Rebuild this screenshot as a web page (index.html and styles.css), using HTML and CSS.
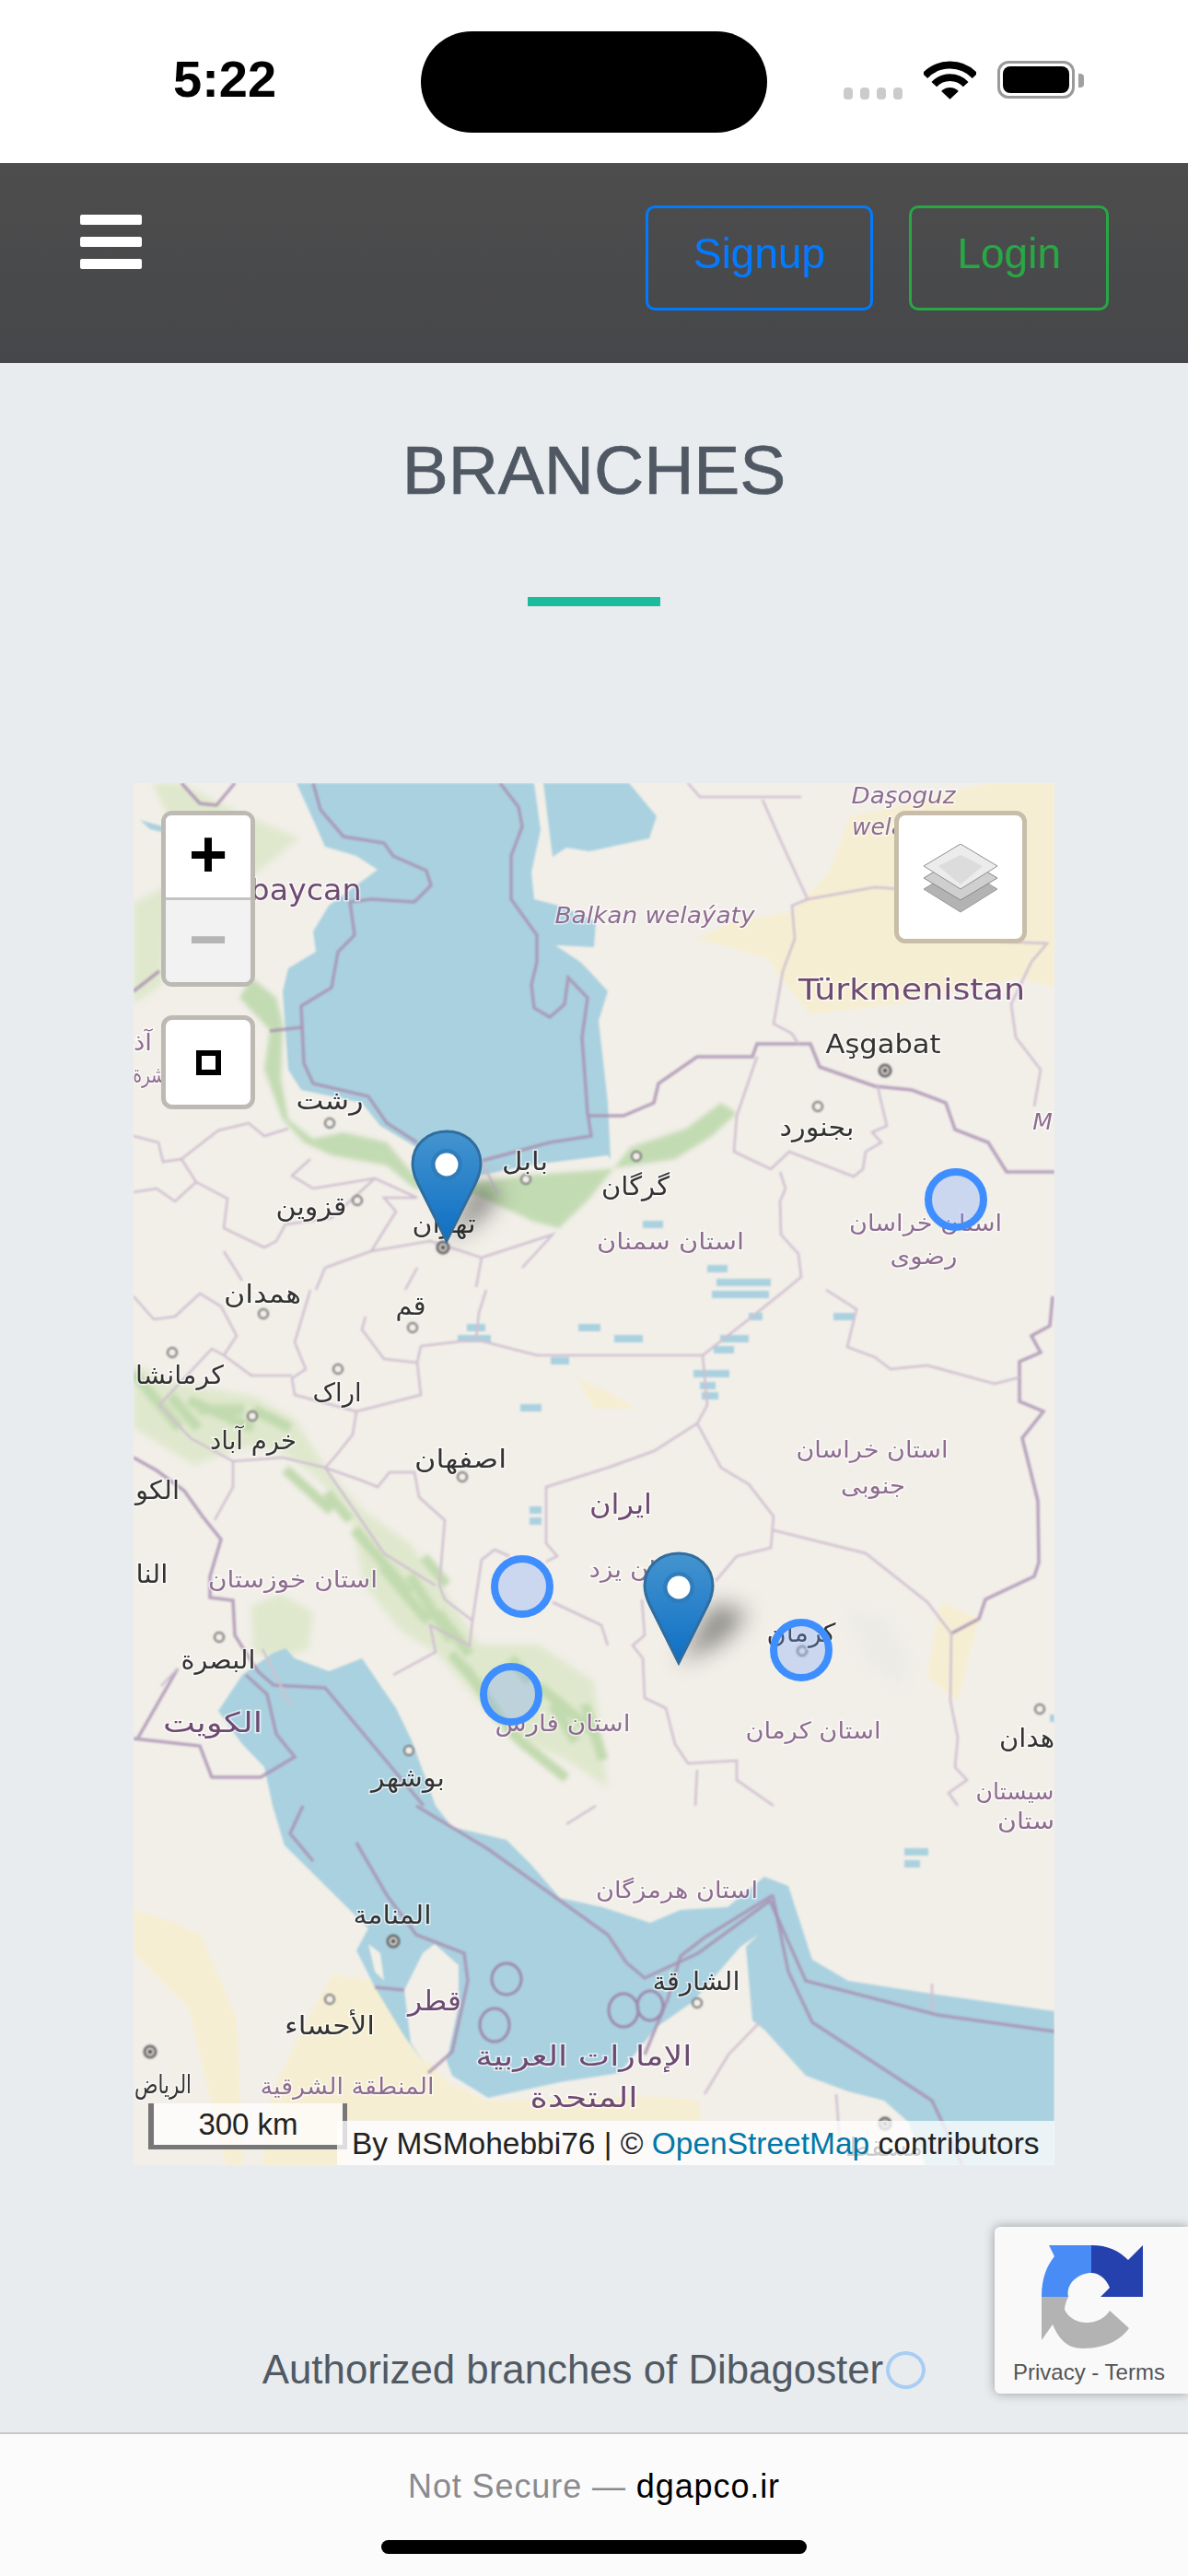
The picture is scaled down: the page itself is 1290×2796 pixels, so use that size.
FILE: index.html
```html
<!DOCTYPE html>
<html lang="en">
<head>
<meta charset="utf-8">
<title>Branches</title>
<link rel="stylesheet" href="styles.css">
</head>
<body>
<div class="page">
  <header class="status">
    <span class="time">5:22</span>
    <span class="island"></span>
    <span class="signal"><i></i><i></i><i></i><i></i></span>
    <svg class="wifi" viewBox="0 0 58 42"><path class="wifi-arc" d="M1.3 16.2A38 38 0 0 1 56.7 16.2"/><path class="wifi-arc" d="M11.5 25.7A24 24 0 0 1 46.5 25.7"/><path d="M29 42L19.5 33.2A13 13 0 0 1 38.5 33.2Z"/></svg>
    <span class="battery"><span class="battery-level"></span></span>
    <span class="battery-nub"></span>
  </header>

  <nav class="nav">
    <div class="burger"><i></i><i></i><i></i></div>
    <div class="nav-actions">
      <a class="btn btn-blue">Signup</a>
      <a class="btn btn-green">Login</a>
    </div>
  </nav>

  <main class="main">
    <h1 class="title">BRANCHES</h1>
    <div class="rule"></div>
    <section class="map">
      <svg class="map-art" viewBox="0 0 1000 1500" width="1000" height="1500">
        <rect class="land" width="1000" height="1500"/>
        <g class="soft">
          <path class="desert" d="M612 169L650 150L715 140L755 97L778 36L828 26L928 0L1000 0L1000 222L962 211L828 240L735 251L702 211L688 190Z"/>
          <path class="desert" d="M216 1293L262 1300L301 1363L340 1410L385 1430L560 1425L615 1430L615 1452L230 1452L232 1500L140 1500L150 1420L190 1340Z"/>
          <path class="desert" d="M0 1223L40 1235L73 1250L112 1340L119 1500L100 1500L60 1330L0 1270Z"/>
          <path class="desert" d="M878 889L918 907L895 996L862 971L870 920Z"/>
          <path class="desert" d="M482 646L515 660L545 679L500 679Z"/>
          <path class="dusk" d="M772 896L815 905L842 950L835 982L800 960Z"/>
          <path class="green" d="M128 211L155 233L162 261L160 320L168 365L195 386L228 379L275 390L305 426L372 433L435 425L515 419L588 408L628 383L655 358L638 347L600 375L540 395L495 451L462 483L435 476L372 447L305 440L275 415L215 404L185 390L162 365L142 311L148 268L115 233Z"/>
          <path class="green-soft" d="M0 630L40 650L130 665L175 690L210 745L250 790L300 825L340 880L375 935L440 935L500 975L515 1090L470 1060L410 1035L360 980L330 945L290 920L250 870L235 790L195 750L160 725L125 720L65 740L0 700Z"/>
          <path class="green-soft" d="M128 893L160 880L195 900L190 940L160 950L130 945Z"/>
          <path class="green-soft" d="M20 0L50 0L110 30L180 60L130 100L90 60L40 40Z"/>
          <path class="green-soft" d="M0 130L40 110L30 220L0 240Z"/>
          <path class="green-line" d="M60 670L130 700M165 745L215 790M240 810L300 880M270 850L320 910M300 860L345 930M360 960L395 1010M420 1040L470 1080M440 980L500 1030M0 640L50 700M70 680L120 680M40 665L70 700M130 680L170 700M210 770L235 800M315 840L340 870M330 900L365 945M345 945L380 985M385 1000L420 1040M455 1000L480 1040M490 1000L510 1060M410 950L430 975"/>
          <path class="water" d="M177 0L192 33L208 69L242 79L265 94L212 133L195 161L198 183L168 201L162 226L165 269L168 311L182 333L248 347L268 372L305 394L340 420L375 426L428 415L515 404L518 408L515 347L505 258L515 226L495 204L485 194L458 176L500 178L502 150L462 133L435 126L432 97L442 51L435 0Z"/>
          <path class="water" d="M445 0L538 0L568 36L560 60L495 74L470 70L455 80Z"/>
          <path class="water" d="M7 40L35 48L35 54L18 50Z"/>
          <path class="water" d="M118 968L150 945L165 939L175 950L212 964L248 950L285 1004L302 1039L328 1110L346 1133L405 1147L431 1173L463 1210L509 1220L561 1237L594 1223L645 1220L685 1187L711 1197L737 1277L776 1300L860 1313L1000 1333L1000 1500L860 1500L841 1453L815 1430L776 1420L730 1403L685 1353L672 1343L665 1263L678 1250L659 1263L607 1323L568 1350L528 1400L463 1410L385 1427L346 1403L340 1387L314 1387L294 1360L262 1307L242 1267L255 1243L164 1153L151 1110L142 1068L118 1043L92 1007Z"/>
          <path class="land" d="M314 1270L327 1260L353 1283L353 1327L340 1387L314 1387L301 1367L294 1310Z"/>
          <path class="land" d="M255 1260L268 1270L272 1300L262 1290Z"/>
          <path class="salt" d="M352 603H388M362 591H382M483 591H507M453 627H473M420 678H443M430 789H443M430 801H443M495 591H507M522 603H553M637 603H668M630 615H652M608 641H647M615 654H632M617 665H635M668 579H683M760 579H782M628 555H690M623 527H645M633 542H692M553 479H575M837 1160H863M837 1173H854M995 1015H1000"/>
          <path class="country" d="M398 0L418 26L422 47L410 79L410 126L438 165L438 194L432 219L435 244L452 254L468 240L472 211L493 233L487 276L493 358L497 383L452 390L378 410"/>
          <path class="country" d="M195 0L203 29L228 58L272 65L282 79L318 95L323 111L305 129L258 126L235 129L240 165L222 183L215 222L182 242L185 304L195 326L255 340L275 369L308 390"/>
          <path class="country" d="M148 269L183 265M0 226L28 204M52 0L72 22L90 24L110 0"/>
          <path class="country" d="M495 361L532 361L565 347L570 326L612 297L672 297L677 283L735 283L745 308L805 329L845 333L882 347L892 376L928 390L948 422L1000 422"/>
          <path class="country" d="M998 557L995 589L975 600L985 618L962 628L962 671L988 682L965 711L982 779L983 846L978 861L925 886L918 907L888 923"/>
          <path class="country" d="M0 732L25 746L55 768L75 796L95 821L83 861L83 884L108 887L110 925L135 964L152 979L208 982L315 1110M307 1110L385 1157L515 1250L535 1280L555 1297L613 1270L691 1213L730 1300L873 1337L1000 1355"/>
          <path class="country" d="M0 1037L72 1045L85 1079L138 1079L175 1057L155 1032L145 989L122 968M48 961L5 1036"/>
          <path class="country" d="M184 1110L170 1140L195 1170M242 1150L275 1207L307 1250L359 1270L363 1300L346 1377L320 1400M294 1310L262 1307M694 1207L620 1253L594 1273L580 1320L555 1380M694 1207L711 1290L737 1345L867 1430L900 1500"/>
          <path class="prov" d="M602 0L615 15L725 15M683 18L702 61L725 111L732 126L715 133L718 169L705 204L695 261L715 272L722 283M732 126L805 113L832 115M942 172L992 174L975 194L953 240L958 276L985 311L978 351"/>
          <path class="prov" d="M677 297L655 361L652 400L692 419L712 400L782 427L792 419L795 400L812 390L802 379L818 372L812 347L808 329"/>
          <path class="prov" d="M702 422L708 440L702 454L703 490L722 511L725 536L708 550L668 582L618 621M752 550L785 571L775 612L805 623L822 636L862 632L935 652L962 645"/>
          <path class="prov" d="M515 621L618 621L623 675L612 695L565 725L515 743L448 764L448 825L460 839L448 845M612 695L638 743L668 761L695 796L692 830L655 839L632 866M695 811L795 836L862 889L888 923L887 996L895 1036L892 1068L905 1082L885 1096L895 1110"/>
          <path class="prov" d="M552 886L555 925L542 936L553 950L555 993L578 1004L588 1043L602 1064L655 1061L655 1082L695 1110M612 1071L610 1110"/>
          <path class="prov" d="M312 611L372 604L438 621L515 621M312 611L308 629L312 664L242 682L238 707L218 732L208 743M383 550L375 575L372 604M252 579L248 593L272 625L308 629M192 550L175 607L187 636L172 646L175 664L242 682"/>
          <path class="prov" d="M0 557L22 582L45 579L72 554L95 568L112 600L98 621L128 643L172 643M98 621L85 614L28 675L62 711L108 736L162 732L208 743L248 757L265 764L278 748L305 748L310 775L338 800L332 871L338 886L368 909L365 936L322 914L328 943L282 968M368 909L378 843L392 832L408 839M455 889L508 914L515 936M208 743L272 836L328 871M108 736L108 764L88 800"/>
          <path class="prov" d="M0 383L27 390L32 411L52 408L92 377L125 369L142 383L168 375M52 408L68 433L45 454L25 440L0 444M68 433L102 451L98 483L142 504L155 497L165 479L215 472L262 429M192 408L172 426L195 440L262 429L308 450L272 450L285 465L258 508L322 497L378 515L372 547M378 515L455 490L422 526M98 508L118 540M208 526L258 508M308 526L295 550M208 526L198 550M378 410L395 445"/>
          <path class="prov" d="M502 1110L470 1130M620 1423L646 1380L680 1345M763 1423L768 1490M867 1303L867 1333M140 940L170 1000M48 961L30 980"/>
          <ellipse class="country-thin" cx="405" cy="1298" rx="16" ry="17"/>
          <ellipse class="country-thin" cx="392" cy="1348" rx="16" ry="18"/>
          <ellipse class="country-thin" cx="532" cy="1332" rx="16" ry="18"/>
          <ellipse class="country-thin" cx="561" cy="1327" rx="14" ry="16"/>
          <circle class="town" cx="213" cy="369" r="5"/><circle class="town" cx="426" cy="430" r="5"/>
          <circle class="town" cx="243" cy="453" r="5"/><circle class="town" cx="546" cy="405" r="5"/>
          <circle class="town" cx="743" cy="351" r="5"/><circle class="town" cx="141" cy="576" r="5"/>
          <circle class="town" cx="303" cy="591" r="5"/><circle class="town" cx="42" cy="618" r="5"/>
          <circle class="town" cx="222" cy="636" r="5"/><circle class="town" cx="129" cy="687" r="5"/>
          <circle class="town" cx="357" cy="753" r="5"/><circle class="town" cx="93" cy="927" r="5"/>
          <circle class="town" cx="299" cy="1050" r="5"/><circle class="town" cx="726" cy="942" r="5"/>
          <circle class="town" cx="984" cy="1005" r="5"/><circle class="town" cx="213" cy="1320" r="5"/>
          <circle class="town" cx="612" cy="1324" r="5"/>
          <circle class="cap" cx="816" cy="312" r="6"/><circle class="cap-c" cx="816" cy="312" r="2.5"/>
          <circle class="cap" cx="336" cy="504" r="6"/><circle class="cap-c" cx="336" cy="504" r="2.5"/>
          <circle class="cap" cx="282" cy="1257" r="6"/><circle class="cap-c" cx="282" cy="1257" r="2.5"/>
          <circle class="cap" cx="18" cy="1377" r="6"/><circle class="cap-c" cx="18" cy="1377" r="2.5"/>
          <circle class="cap" cx="816" cy="1455" r="6"/><circle class="cap-c" cx="816" cy="1455" r="2.5"/>
        </g>
        <g class="labels">
          <text class="tc" x="187" y="127" textLength="121" lengthAdjust="spacingAndGlyphs">baycan</text>
          <text class="ti" x="836" y="22" textLength="113" lengthAdjust="spacingAndGlyphs">Daşoguz</text>
          <text class="ti ts" x="780" y="56">welaýaty</text>
          <text class="ti" x="566" y="152" textLength="217" lengthAdjust="spacingAndGlyphs">Balkan welaýaty</text>
          <text class="tc" x="845" y="235" textLength="246" lengthAdjust="spacingAndGlyphs">Türkmenistan</text>
          <text class="tl" x="814" y="293" textLength="125" lengthAdjust="spacingAndGlyphs">Aşgabat</text>
          <text class="ti" x="987" y="376">M</text>
          <text class="tl" x="742" y="383" textLength="81" lengthAdjust="spacingAndGlyphs">بجنورد</text>
          <text class="tl" x="545" y="447" textLength="74" lengthAdjust="spacingAndGlyphs">گرگان</text>
          <text class="tp" x="583" y="506" textLength="160" lengthAdjust="spacingAndGlyphs">استان سمنان</text>
          <text class="tp" x="860" y="486" textLength="166" lengthAdjust="spacingAndGlyphs">استان خراسان</text>
          <text class="tp" x="858" y="522" textLength="73" lengthAdjust="spacingAndGlyphs">رضوی</text>
          <text class="tp" x="10" y="290" textLength="20" lengthAdjust="spacingAndGlyphs">آذ</text>
          <text class="tp" x="17" y="325" textLength="35" lengthAdjust="spacingAndGlyphs">شرة</text>
          <text class="tl" x="213" y="354" textLength="73" lengthAdjust="spacingAndGlyphs">رشت</text>
          <text class="tl" x="425" y="420" textLength="50" lengthAdjust="spacingAndGlyphs">بابل</text>
          <text class="tl" x="193" y="469" textLength="77" lengthAdjust="spacingAndGlyphs">قزوین</text>
          <text class="tl" x="337" y="488" textLength="69" lengthAdjust="spacingAndGlyphs">تهران</text>
          <text class="tl" x="140" y="564" textLength="84" lengthAdjust="spacingAndGlyphs">همدان</text>
          <text class="tl" x="301" y="577" textLength="33" lengthAdjust="spacingAndGlyphs">قم</text>
          <text class="tl" x="50" y="652" textLength="96" lengthAdjust="spacingAndGlyphs">کرمانشا</text>
          <text class="tl" x="221" y="671" textLength="53" lengthAdjust="spacingAndGlyphs">اراک</text>
          <text class="tl" x="130" y="723" textLength="94" lengthAdjust="spacingAndGlyphs">خرم آباد</text>
          <text class="tl" x="355" y="743" textLength="100" lengthAdjust="spacingAndGlyphs">اصفهان</text>
          <text class="tl" x="26" y="777" textLength="48" lengthAdjust="spacingAndGlyphs">الکو</text>
          <text class="tl" x="20" y="868" textLength="35" lengthAdjust="spacingAndGlyphs">النا</text>
          <text class="tp" x="173" y="873" textLength="184" lengthAdjust="spacingAndGlyphs">استان خوزستان</text>
          <text class="tl" x="92" y="961" textLength="81" lengthAdjust="spacingAndGlyphs">البصرة</text>
          <text class="tc ar" x="86" y="1030" textLength="108" lengthAdjust="spacingAndGlyphs">الكويت</text>
          <text class="tl" x="298" y="1089" textLength="80" lengthAdjust="spacingAndGlyphs">بوشهر</text>
          <text class="tp" x="466" y="1029" textLength="147" lengthAdjust="spacingAndGlyphs">استان فارس</text>
          <text class="tc ar" x="529" y="793" textLength="68" lengthAdjust="spacingAndGlyphs">ایران</text>
          <text class="tp" x="551" y="862" textLength="113" lengthAdjust="spacingAndGlyphs">استان یزد</text>
          <text class="tl" x="725" y="932" textLength="75" lengthAdjust="spacingAndGlyphs">کرمان</text>
          <text class="tp" x="738" y="1037" textLength="147" lengthAdjust="spacingAndGlyphs">استان کرمان</text>
          <text class="tp" x="802" y="732" textLength="165" lengthAdjust="spacingAndGlyphs">استان خراسان</text>
          <text class="tp" x="803" y="771" textLength="70" lengthAdjust="spacingAndGlyphs">جنوبی</text>
          <text class="tl" x="970" y="1046" textLength="60" lengthAdjust="spacingAndGlyphs">هدان</text>
          <text class="tp" x="957" y="1103" textLength="85" lengthAdjust="spacingAndGlyphs">سیستان</text>
          <text class="tp" x="969" y="1135" textLength="62" lengthAdjust="spacingAndGlyphs">ستان</text>
          <text class="tp" x="590" y="1210" textLength="176" lengthAdjust="spacingAndGlyphs">استان هرمزگان</text>
          <text class="tl" x="281" y="1238" textLength="85" lengthAdjust="spacingAndGlyphs">المنامة</text>
          <text class="tc ar" x="327" y="1332" textLength="58" lengthAdjust="spacingAndGlyphs">قطر</text>
          <text class="tl" x="213" y="1358" textLength="98" lengthAdjust="spacingAndGlyphs">الأحساء</text>
          <text class="tl" x="611" y="1310" textLength="95" lengthAdjust="spacingAndGlyphs">الشارقة</text>
          <text class="tc ar" x="489" y="1392" textLength="235" lengthAdjust="spacingAndGlyphs">الإمارات العربية</text>
          <text class="tc ar" x="489" y="1437" textLength="117" lengthAdjust="spacingAndGlyphs">المتحدة</text>
          <text class="tl" x="32" y="1422" textLength="62" lengthAdjust="spacingAndGlyphs">الرياض</text>
          <text class="tp" x="232" y="1423" textLength="189" lengthAdjust="spacingAndGlyphs">المنطقة الشرقية</text>
          <text class="tl" x="815" y="1490" textLength="84" lengthAdjust="spacingAndGlyphs">مسقط</text>
        </g>
        <g class="markers">
          <circle class="zone" cx="893" cy="452" r="30"/>
          <circle class="zone" cx="422" cy="872" r="30"/>
          <circle class="zone" cx="410" cy="989" r="30"/>
          <circle class="zone" cx="725" cy="941" r="30"/>
        </g>
        <defs>
          <linearGradient id="pinfill" x1="0" y1="0" x2="0" y2="1">
            <stop offset="0" stop-color="#4494cf"/><stop offset="1" stop-color="#0f6fc4"/>
          </linearGradient>
          <path id="pin" d="M0 0L-31 -62C-37 -74 -37 -82 -37 -84C-37 -105 -20 -119 0 -119C20 -119 37 -105 37 -84C37 -82 37 -74 31 -62Z"/>
        </defs>
        <path class="pin-shadow" d="M340 497L372 432L400 445L378 472Z"/>
        <path class="pin-shadow" d="M592 955L630 890L668 900L640 932Z"/>
        <g transform="translate(340 497)">
          <use href="#pin" class="pin-body"/>
          <circle class="pin-ring" cx="0" cy="-83" r="17"/>
          <circle class="pin-eye" cx="0" cy="-83" r="12.5"/>
        </g>
        <g transform="translate(592 955)">
          <use href="#pin" class="pin-body"/>
          <circle class="pin-ring" cx="0" cy="-82" r="17"/>
          <circle class="pin-eye" cx="0" cy="-82" r="12.5"/>
        </g>
      </svg>

      <div class="ctl ctl-zoom">
        <button class="ctl-btn">+</button>
        <button class="ctl-btn ctl-off">−</button>
      </div>
      <div class="ctl ctl-full"><span class="full-icon"></span></div>
      <div class="ctl ctl-layers">
        <svg class="layers-icon" viewBox="0 0 80 75">
          <path class="ly3" d="M0 49L40 25L80 49L40 74Z"/>
          <path class="ly2" d="M0 37L40 13L80 37L40 61Z"/>
          <path class="ly1" d="M0 24L40 0L80 24L40 49Z"/>
          <path class="ly0" d="M16 24L40 12L64 24L40 44Z"/>
        </svg>
      </div>
      <div class="scale"><span>300 km</span></div>
      <div class="attrib">By MSMohebbi76 | © <a class="attrib-link">OpenStreetMap</a> contributors</div>
    </section>
    <div class="caption"><p class="caption-text">Authorized branches of Dibagoster</p><span class="caption-ring"></span></div>
  </main>

  <footer class="addr">
    <p class="addr-text"><span class="addr-dim">Not Secure — </span>dgapco.ir</p>
    <span class="home"></span>
  </footer>

  <aside class="captcha">
    <svg class="captcha-logo" viewBox="0 0 110 113">
      <path class="rc-blue" d="M0 56C0 35 6 22 14 12L8 0L54 0L54 30C42 30 26 40 29 56Z"/>
      <path class="rc-navy" d="M54 0C72 0 84 6 94 16L110 0L110 56L64 56L74 46C70 36 62 30 54 30Z"/>
      <path class="rc-gray" d="M0 56L29 56C25 64 25 70 25 70C30 80 40 84 49 84C60 84 70 78 74 71L95 90C85 105 65 112 45 112C30 112 20 105 12 86L0 103Z"/>
    </svg>
    <p class="captcha-text">Privacy - Terms</p>
  </aside>
</div>
</body>
</html>
```
FILE: styles.css
```css
* { box-sizing: border-box; }
html, body { margin: 0; padding: 0; }
body { width: 1290px; height: 2796px; overflow: hidden; background: #e9ecef; font-family: "Liberation Sans", Arial, sans-serif; }
.page { position: relative; width: 1290px; height: 2796px; display: flex; flex-direction: column; }

.status { height: 177px; flex: none; background: #fff; display: flex; align-items: flex-start; }
.time { margin: 55px 0 0 188px; width: 110px; font-size: 56px; line-height: 62px; font-weight: 700; color: #000; white-space: nowrap; }
.island { margin: 34px 0 0 159px; width: 376px; height: 110px; border-radius: 55px; background: #000; }
.signal { margin: 95px 0 0 83px; display: flex; gap: 8px; }
.signal i { width: 10px; height: 13px; border-radius: 4px; background: #cbcbcb; }
.wifi { margin: 66px 0 0 23px; width: 57px; height: 42px; }
.wifi-arc { fill: none; stroke: #000; stroke-width: 8; }
.battery { margin: 66px 0 0 23px; width: 84px; height: 41px; border: 3px solid #9a9a9a; border-radius: 12px; padding: 3px; }
.battery-level { display: block; width: 100%; height: 100%; border-radius: 8px; background: #000; }
.battery-nub { margin: 80px 0 0 4px; width: 6px; height: 15px; border-radius: 0 4px 4px 0; background: #a0a0a0; }

.nav { height: 217px; flex: none; padding: 0 86px 0 87px; display: flex; align-items: flex-start; justify-content: space-between; background: linear-gradient(#4d4d4d, #46474a); }
.burger { margin-top: 56px; width: 67px; display: flex; flex-direction: column; gap: 13px; }
.burger i { display: block; height: 11px; border-radius: 2px; background: #fff; }
.nav-actions { margin-top: 46px; display: flex; gap: 39px; }
.btn { height: 114px; padding: 0 49px 10px; display: flex; align-items: center; border: 3px solid; border-radius: 10px; font-size: 46px; }
.btn-blue { color: #007bff; border-color: #007bff; }
.btn-green { color: #28a745; border-color: #28a745; }

.main { display: flex; flex-direction: column; }
.title { margin: 79px 0 0; font-size: 75px; line-height: 74px; font-weight: 400; text-align: center; color: #505963; -webkit-text-stroke: .7px #505963; }
.rule { margin: 101px auto 0; width: 144px; height: 10px; background: #1abc9c; }
.map { position: relative; margin: 192px 0 0 145px; width: 1000px; height: 1500px; overflow: hidden; }
.map-art { display: block; }
.land { fill: #f2efe9; }
.soft { filter: blur(0.9px); }
.desert { fill: #f6eed3; }
.dusk { fill: #ecebe6; filter: blur(6px); }
.green { fill: #c3dbb3; filter: blur(2px); }
.green-soft { fill: #dfe8cd; filter: blur(3px); }
.green-line { fill: none; stroke: #c2daaf; stroke-width: 11; filter: blur(2px); }
.water { fill: #aad1df; }
.salt { fill: none; stroke: #aad1df; stroke-width: 8; }
.country { fill: none; stroke: #a88fb0; stroke-width: 3.5; opacity: .8; }
.country-thin { fill: none; stroke: #9c88ad; stroke-width: 3; }
.prov { fill: none; stroke: #d0c0d0; stroke-width: 2.5; }
.town { fill: #f2efe9; stroke: #6f6f6f; stroke-width: 2; }
.cap { fill: #f2efe9; stroke: #666; stroke-width: 3; }
.cap-c { fill: #555; }
.labels { filter: blur(.4px); }
.labels text { font-family: "DejaVu Sans", sans-serif; text-anchor: middle; paint-order: stroke; stroke: rgba(255,255,255,.6); stroke-width: 3px; }
.labels .tl { font-size: 28px; fill: #333; }
.labels .tp { font-size: 25px; fill: #8e6c90; }
.labels .tc { font-size: 32px; fill: #6e4a72; }
.labels .ti { font-size: 25px; font-style: italic; fill: #8e6c90; }
.labels .ar { font-size: 30px; }
.labels .ts { text-anchor: start; }
.zone { fill: rgba(120,165,250,.32); stroke: #3e8eff; stroke-width: 8; }
.pin-shadow { fill: rgba(0,0,0,.42); filter: blur(12px); }
.pin-body { fill: url(#pinfill); stroke: #2f6d9e; stroke-width: 3; }
.pin-ring { fill: #2f7ab8; opacity: .85; }
.pin-eye { fill: #fff; }

.ctl { position: absolute; border: 5px solid #bdbab4; border-radius: 12px; background: #fff; }
.ctl-zoom { left: 30px; top: 30px; width: 102px; height: 191px; display: flex; flex-direction: column; }
.ctl-btn { flex: 1; margin: 0; padding: 0 0 4px; border: 0; background: #fff; border-radius: 6px 6px 0 0; font: 700 72px/1 "Liberation Sans", Arial, sans-serif; color: #000; }
.ctl-off { padding-bottom: 5px; border-top: 3px solid #c6c4c0; background: #f2f2f2; color: #b5b5b5; border-radius: 0 0 6px 6px; }
.ctl-full { left: 30px; top: 252px; width: 102px; height: 102px; display: flex; align-items: center; justify-content: center; }
.full-icon { width: 27px; height: 27px; border: 6px solid #000; }
.ctl-layers { left: 826px; top: 30px; width: 144px; height: 144px; padding-top: 3px; border-color: #c8bda8; display: flex; align-items: center; justify-content: center; }
.layers-icon { width: 80px; height: 75px; }
.ly3 { fill: #b3b3b3; stroke: #999; stroke-width: 1; }
.ly2 { fill: #cfcfcf; stroke: #888; stroke-width: 1; }
.ly1 { fill: #ececec; stroke: #8f8f8f; stroke-width: 1; }
.ly0 { fill: #dcdcdc; }

.scale { position: absolute; left: 16px; top: 1433px; width: 216px; height: 50px; display: flex; align-items: center; justify-content: center; background: rgba(255,255,255,.72); border: solid #777; border-width: 0 5px 5px 6px; font-size: 33px; color: #222; }
.attrib { position: absolute; left: 221px; top: 1452px; width: 779px; height: 48px; padding: 6px 0 0 16px; background: rgba(255,255,255,.75); font-size: 33.5px; line-height: 38px; color: #222; white-space: nowrap; }
.attrib-link { color: #0078a8; }

.caption { margin-top: 201px; display: flex; justify-content: center; align-items: center; gap: 3px; }
.caption-text { margin: 0; font-size: 43.8px; line-height: 42px; color: #515a63; }
.caption-ring { width: 43px; height: 41px; border: 4px solid #a9cdf3; border-radius: 50%; }

.addr { margin-top: auto; height: 156px; flex: none; border-top: 2px solid #c9c9cc; background: #fbfbfc; display: flex; flex-direction: column; align-items: center; }
.addr-text { margin: 36px 0 0; font-size: 36px; line-height: 42px; letter-spacing: .9px; color: #000; white-space: nowrap; }
.addr-dim { color: #8a8a8e; }
.home { margin-top: 37px; width: 462px; height: 15px; border-radius: 8px; background: #000; }

.captcha { position: absolute; top: 2417px; right: 0; width: 210px; height: 181px; background: #f9f9f9; border-radius: 6px 0 0 6px; box-shadow: 0 0 12px rgba(0,0,0,.35); display: flex; flex-direction: column; }
.captcha-logo { margin: 20px 0 0 51px; width: 110px; height: 113px; }
.captcha-text { margin: 11px 0 0 20px; font-size: 24px; line-height: 28px; color: #555; white-space: nowrap; }
.rc-blue { fill: #4a8cf5; }
.rc-navy { fill: #2441ad; }
.rc-gray { fill: #b3b3b3; }
```
